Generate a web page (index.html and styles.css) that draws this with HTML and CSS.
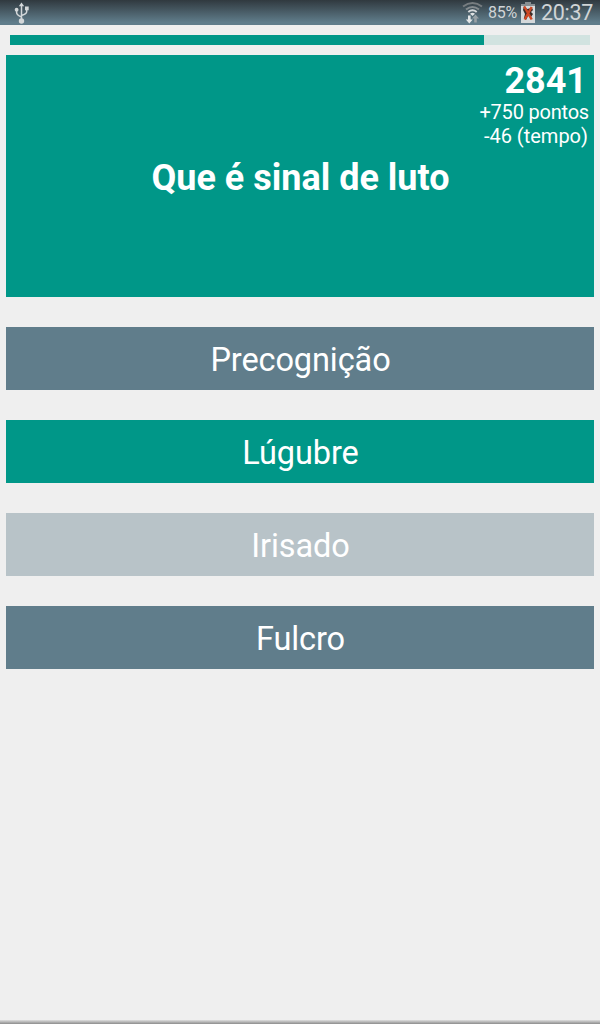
FILE: index.html
```html
<!DOCTYPE html>
<html lang="pt-BR">
<head>
    <meta charset="UTF-8">
    <meta name="viewport" content="width=device-width, initial-scale=1.0">
    <title>Quiz</title>
    <link rel="stylesheet" href="styles.css">
</head>
<body>
    <div class="status-bar">
        <svg class="usb-icon" width="16" height="22" viewBox="0 0 16 22">
            <path d="M7.500 4v14M2.600 8v2.500q0 2.500 4.900 4.500M12.700 8v1.500q0 2.500-5.200 4" fill="none" stroke="#d3d7d9" stroke-width="1.500"/>
            <path d="M7.500 .5l2.700 3.800h-5.400z" fill="#d3d7d9"/>
            <circle cx="2.600" cy="7.700" r="1.900" fill="#d3d7d9"/>
            <path d="M11 4.500h3.700v3.800h-3.700z" fill="#d3d7d9"/>
            <circle cx="7.500" cy="19" r="2.700" fill="#d3d7d9"/>
        </svg>

        <div class="status-right">
            <svg class="wifi-icon" width="22" height="24" viewBox="0 0 22 24">
                <path d="M2 5.500Q11.500-1.500 21 5.500" fill="none" stroke="#777d80" stroke-width="2"/>
                <path d="M5 8.500Q11.500 3.500 18 8.500" fill="none" stroke="#858c90" stroke-width="2"/>
                <path d="M7.300 11Q11.500 7.500 15.700 11" fill="none" stroke="#d5d8da" stroke-width="2"/>
                <path d="M9 12.700Q11.500 11 14 12.700L11.500 15z" fill="#e0e3e4"/>
                <path d="M7 14.500h2.600v4h2.200l-3.500 4-3.500-4h2.200z" fill="#e4e7e8"/>
                <path d="M13.200 21.500h2.600v-4h2.200l-3.500-4-3.500 4h2.200z" fill="#97a0a5"/>
            </svg>
            <span class="battery-text">85%</span>
            <svg class="battery-icon" width="14" height="21" viewBox="0 0 14 21">
                <path d="M0 2h4.500v-2h5v2h4.500v19h-14z" fill="#d5d9db"/>
                <path d="M0 2h4.500v-2h5v2h4.500v2h-14z" fill="#878e91"/>
                <path d="M3 4l3 3 5-1 1 2-2 2 2 2-2 3-3-1-2 4-2-2 1-4-2-4z" fill="#3b2a26"/>
                <path d="M3.200 4.500l7.500 13M10.700 5l-7 12.500" stroke="#cf4825" stroke-width="2.500" fill="none"/>
            </svg>
            <span class="clock">20:37</span>
        </div>
    </div>

    <div class="game">
        <div class="timer">
            <div class="timer-fill"></div>
        </div>

        <div class="question">
            <h1>Que é sinal de luto</h1>
            <div class="score">
                <div class="total">2841</div>
                <div class="points">+750 pontos</div>
                <div class="penalty">-46 (tempo)</div>
            </div>
        </div>

        <div class="answers">
            <button class="btn">Precognição</button>
            <button class="btn correct">Lúgubre</button>
            <button class="btn removed">Irisado</button>
            <button class="btn">Fulcro</button>
        </div>
    </div>

    <div class="bottom-edge"></div>
</body>
</html>
```
FILE: styles.css
```css
* {
    margin: 0;
    padding: 0;
    box-sizing: border-box;
}

body {
    font-family: Roboto, sans-serif;
    background: #efefef;
    height: 100vh;
    display: flex;
    flex-direction: column;
    overflow: hidden;
}

.status-bar {
    height: 25px;
    padding: 0 6px 0 14px;
    display: flex;
    justify-content: space-between;
    background: linear-gradient(#30393f, #607d8b 90%);
    color: #d0d4d6;
}

.usb-icon {
    margin-top: 2px;
}

.status-right {
    display: flex;
    align-items: center;
}

.battery-text {
    width: 30px;
    margin-left: 5px;
    font-size: 16px;
    letter-spacing: -0.3px;
    white-space: nowrap;
}

.battery-icon {
    margin: -1px 6px 0 3px;
}

.clock {
    width: 53px;
    margin-top: -1px;
    font-size: 21.5px;
    letter-spacing: -0.3px;
    white-space: nowrap;
}

.game {
    flex: 1;
    padding: 10px 6px 0;
}

.timer {
    height: 10px;
    margin: 0 4px 10px;
    background: #d1e3e0;
}

.timer-fill {
    width: 474px;
    height: 100%;
    background: #009788;
}

.question {
    position: relative;
    height: 242px;
    padding: 4px 0 0 1px;
    display: flex;
    align-items: center;
    justify-content: center;
    background: #009788;
    color: white;
}

.question h1 {
    font-size: 36px;
    line-height: 42px;
    white-space: nowrap;
}

/* Score sits over the corner of the question card */
.score {
    position: absolute;
    top: 5px;
    right: 5px;
    font-size: 20px;
    line-height: 24px;
    text-align: right;
}

.total {
    height: 40px;
    padding-right: 2px;
    font-size: 36px;
    font-weight: bold;
    line-height: 42px;
}

.points {
    letter-spacing: -0.2px;
}

.penalty {
    padding-right: 1px;
}

.answers {
    display: flex;
    flex-direction: column;
    gap: 30px;
    margin-top: 30px;
}

.btn {
    height: 63px;
    padding: 2px 0 0 1px;
    background: #607d8b;
    color: white;
    border: none;
    font-family: inherit;
    font-size: 32.5px;
    letter-spacing: -0.1px;
    cursor: pointer;
}

.btn.correct {
    background: #009788;
}

.btn.removed {
    background: #b8c3c8;
}

.bottom-edge {
    height: 4px;
    background: linear-gradient(#dedede, #8c8c8c);
}
```
